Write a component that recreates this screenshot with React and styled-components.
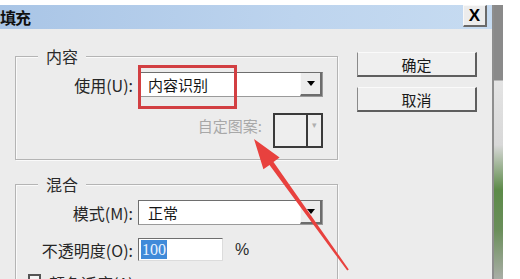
import React from 'react'
import styled, { createGlobalStyle } from 'styled-components'

const GlobalStyle = createGlobalStyle`
    html, body {
        margin: 0;
        padding: 0;
        background: #ffffff;
    }
    body {
        font-family: "Noto Sans CJK SC", "Noto Sans", sans-serif;
        color: #1e1e1e;
    }
`

function Arrow() {
    return (
        <ArrowLayer width="520" height="279" viewBox="0 0 520 279">
            <polygon
                points="254,139 279.6,157.6 273.5,162 348.8,269.4 347.2,270.6 269.5,164.9 263.4,169.2"
                fill="#e8413e"
            />
        </ArrowLayer>
    )
}

function Combo({ value }) {
    return (
        <ComboBox>
            <ComboValue>{value}</ComboValue>
            <DropButton>
                <Triangle />
            </DropButton>
        </ComboBox>
    )
}

function App() {
    return (
        <Page>
            <GlobalStyle />
            <Dialog>
                <TitleBar>
                    <TitleText>填充</TitleText>
                    <CloseButton>X</CloseButton>
                </TitleBar>
                <Body>
                    <LeftColumn>
                        <Group>
                            <Legend>内容</Legend>
                            <FieldRow>
                                <Label>使用(U):</Label>
                                <Combo value="内容识别" />
                            </FieldRow>
                            <PatternRow>
                                <DisabledLabel>自定图案:</DisabledLabel>
                                <PatternPicker>
                                    <PatternSwatch />
                                    <PatternArrow>▾</PatternArrow>
                                </PatternPicker>
                            </PatternRow>
                        </Group>
                        <Group $gap="24px">
                            <Legend>混合</Legend>
                            <FieldRow>
                                <Label>模式(M):</Label>
                                <Combo value="正常" />
                            </FieldRow>
                            <FieldRow $top="13px">
                                <Label>不透明度(O):</Label>
                                <OpacityLine>
                                    <TextInput>
                                        <Selected>100</Selected>
                                    </TextInput>
                                    <Unit>%</Unit>
                                </OpacityLine>
                            </FieldRow>
                            <CheckRow>
                                <CheckBox />
                                <CheckText>颜色适应(A)</CheckText>
                            </CheckRow>
                        </Group>
                    </LeftColumn>
                    <RightColumn>
                        <Button>确定</Button>
                        <Button>取消</Button>
                    </RightColumn>
                </Body>
            </Dialog>
            <Backdrop />
            <Highlight />
            <Arrow />
        </Page>
    )
}

export default App

const Page = styled.div`
    position: relative;
    display: flex;
    align-items: stretch;
    width: 520px;
    height: 279px;
    padding-top: 5px;
    box-sizing: border-box;
    overflow: hidden;
    background: #ffffff;
`

const Dialog = styled.div`
    display: flex;
    flex-direction: column;
    width: 494px;
    flex-shrink: 0;
    box-sizing: border-box;
    background: #ececec;
    border-right: 2px solid #8e8e8e;
`

const TitleBar = styled.div`
    display: flex;
    align-items: flex-start;
    justify-content: space-between;
    height: 25px;
    padding-right: 5px;
    background: linear-gradient(to right, #a9c5e6, #bdd4ee 60%, #c6dbf1);
`

const TitleText = styled.span`
    font-size: 16px;
    font-weight: 700;
    line-height: 24px;
    letter-spacing: -1px;
    color: #101010;
`

const CloseButton = styled.div`
    display: flex;
    align-items: center;
    justify-content: center;
    width: 24px;
    height: 22px;
    box-sizing: border-box;
    background: #ececec;
    border: 1px solid #f8f8f8;
    border-right: 2px solid #6a6a6a;
    border-bottom: 2px solid #6a6a6a;
    font-family: "Liberation Sans", Arial, sans-serif;
    font-weight: 700;
    font-size: 17px;
    color: #000;
`

const Body = styled.div`
    flex: 1;
    display: flex;
    padding-left: 15px;
`

const LeftColumn = styled.div`
    display: flex;
    flex-direction: column;
    width: 323px;
`

const Group = styled.div`
    position: relative;
    margin-top: ${p => p.$gap || '27px'};
    padding: 15px 14px 11px 0;
    border: 1px solid #b4b4b4;
    box-shadow: inset 1px 1px 0 #fafafa, 1px 1px 0 #fafafa;
`

const Legend = styled.span`
    position: absolute;
    top: -11px;
    left: 22px;
    padding: 0 8px;
    background: #ececec;
    font-size: 16px;
    line-height: 20px;
    color: #2a2a2a;
`

const FieldRow = styled.div`
    display: grid;
    grid-template-columns: 117px 1fr;
    column-gap: 5px;
    align-items: center;
    margin-top: ${p => p.$top || '0'};
`

const Label = styled.span`
    text-align: right;
    font-size: 16px;
    line-height: 20px;
    color: #262626;
    white-space: nowrap;
`

const ComboBox = styled.div`
    display: flex;
    align-items: stretch;
    height: 25px;
    box-sizing: border-box;
    background: #ffffff;
    border: 1px solid #9a9a9a;
    border-top-color: #6e6e6e;
    border-left-color: #6e6e6e;
`

const ComboValue = styled.span`
    flex: 1;
    padding-left: 9px;
    font-size: 15px;
    line-height: 23px;
    color: #151515;
`

const DropButton = styled.div`
    display: flex;
    align-items: center;
    justify-content: center;
    width: 22px;
    box-sizing: border-box;
    background: #ececec;
    border-left: 1px solid #fafafa;
    border-right: 2px solid #6c6c6c;
    border-bottom: 2px solid #6c6c6c;
`

const Triangle = styled.span`
    width: 0;
    height: 0;
    border-left: 4px solid transparent;
    border-right: 4px solid transparent;
    border-top: 5px solid #000;
`

const PatternRow = styled.div`
    display: flex;
    justify-content: flex-end;
    align-items: center;
    gap: 11px;
    margin-top: 16px;
`

const DisabledLabel = styled.span`
    font-size: 15px;
    line-height: 20px;
    color: #a8a8a8;
    margin-top: -10px;
`

const PatternPicker = styled.div`
    display: flex;
    width: 50px;
    height: 35px;
    box-sizing: border-box;
    border: 2px solid #3a3a3a;
    background: #eeeeee;
`

const PatternSwatch = styled.div`
    flex: 1;
    border-right: 2px solid #3a3a3a;
`

const PatternArrow = styled.span`
    width: 13px;
    text-align: center;
    font-size: 9px;
    line-height: 20px;
    color: #b0b0b0;
`

const OpacityLine = styled.div`
    display: flex;
    align-items: center;
    gap: 12px;
`

const TextInput = styled.div`
    display: flex;
    align-items: center;
    width: 85px;
    height: 23px;
    box-sizing: border-box;
    padding-left: 2px;
    background: #ffffff;
    border: 1px solid #dcdcdc;
    border-top-color: #6e6e6e;
    border-left-color: #6e6e6e;
`

const Selected = styled.span`
    padding: 0 1px;
    background: #3f8ad9;
    color: #eaf3ff;
    font-family: "Liberation Serif", "Times New Roman", serif;
    font-size: 16px;
    line-height: 19px;
`

const Unit = styled.span`
    font-family: "Liberation Sans", Arial, sans-serif;
    font-size: 16px;
    color: #2a2a2a;
`

const CheckRow = styled.div`
    display: flex;
    align-items: flex-start;
    gap: 8px;
    margin-top: 13px;
    padding-left: 12px;
`

const CheckBox = styled.div`
    width: 13px;
    height: 13px;
    box-sizing: border-box;
    border: 2px solid #555;
    background: #f4f4f4;
`

const CheckText = styled.span`
    font-size: 16px;
    line-height: 16px;
    margin-top: 1px;
    color: #2a2a2a;
`

const RightColumn = styled.div`
    display: flex;
    flex-direction: column;
    gap: 10px;
    margin-left: 19px;
    padding-top: 23px;
`

const Button = styled.div`
    display: flex;
    align-items: center;
    justify-content: center;
    width: 120px;
    height: 25px;
    box-sizing: border-box;
    background: #efefef;
    border: 1px solid #9c9c9c;
    border-top-color: #fafafa;
    border-left-color: #8a8a8a;
    border-right: 2px solid #5e5e5e;
    border-bottom: 2px solid #5e5e5e;
    font-size: 15px;
    color: #1a1a1a;
`

const Backdrop = styled.div`
    width: 9px;
    flex-shrink: 0;
    background: linear-gradient(
        to bottom,
        #8a8a8a 0,
        #8a8a8a 75px,
        #e4e4e4 76px,
        #d8d8d8 140px,
        #5c8a48 185px,
        #6a8e5a 225px,
        #a9aea6 274px
    );
`

const Highlight = styled.div`
    position: absolute;
    left: 138px;
    top: 65px;
    width: 99px;
    height: 44px;
    box-sizing: border-box;
    border: 3px solid #d23f42;
    pointer-events: none;
`

const ArrowLayer = styled.svg`
    position: absolute;
    left: 0;
    top: 0;
    pointer-events: none;
`
